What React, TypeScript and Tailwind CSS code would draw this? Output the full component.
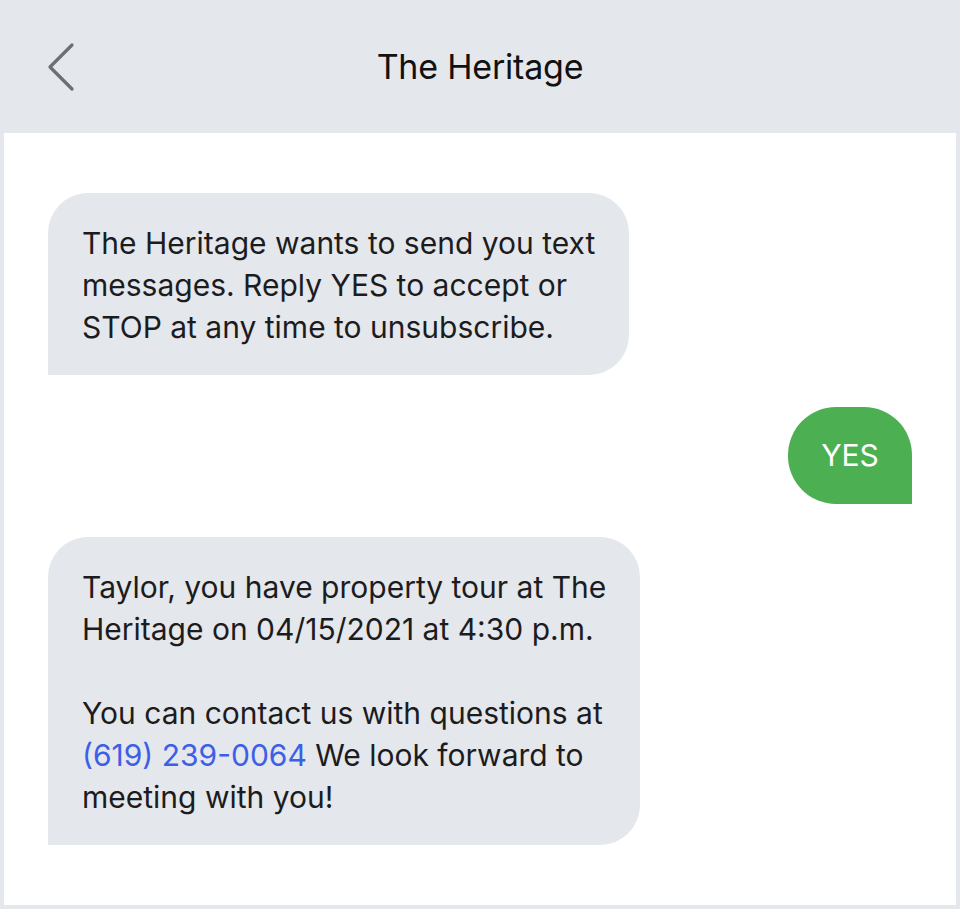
const Bubble = ({ children, className }: { children: React.ReactNode; className: string }) => {
  return <div className={"whitespace-nowrap text-[30px] leading-[42px] text-[#1c1c1e] " + className}>{children}</div>;
};

const App = () => {
  return (
    <div className="h-[909px] w-[960px] bg-[#e4e7eb] font-['Inter',sans-serif] flex flex-col">
      <div className="h-[133px] grid grid-cols-[1fr_auto_1fr] items-center px-[48px]">
        <svg width="30" height="50" viewBox="0 0 30 50" className="ml-[-2px]">
          <path d="M26 3 L4 25 L26 47" fill="none" stroke="#6b6e73" strokeWidth="3.2" strokeLinecap="round" strokeLinejoin="round" />
        </svg>
        <h1 className="text-[34px] text-[#111] tracking-[-0.2px]">The Heritage</h1>
        <div />
      </div>
      <div className="mx-1 h-[772px] bg-white px-[44px] pt-[60px] flex flex-col">
        <Bubble className="w-[581px] h-[182px] bg-[#e4e7eb] rounded-[40px] rounded-bl-none pl-[34px] pt-[29px]">
          The Heritage wants to send you text
          <br />
          messages. Reply YES to accept or
          <br />
          STOP at any time to unsubscribe.
        </Bubble>
        <div className="mt-[32px] self-end w-[124px] h-[97px] bg-[#4caf52] rounded-[48px] rounded-br-none flex items-center justify-center text-white text-[30px]">
          YES
        </div>
        <Bubble className="mt-[33px] w-[592px] h-[308px] bg-[#e4e7eb] rounded-[40px] rounded-bl-none pl-[34px] pt-[29px]">
          Taylor, you have property tour at The
          <br />
          Heritage on 04/15/2021 at 4:30 p.m.
          <br />
          <br />
          You can contact us with questions at
          <br />
          <span className="text-[#3d5ee8]">(619) 239-0064</span> We look forward to
          <br />
          meeting with you!
        </Bubble>
      </div>
    </div>
  );
};

export default App;
